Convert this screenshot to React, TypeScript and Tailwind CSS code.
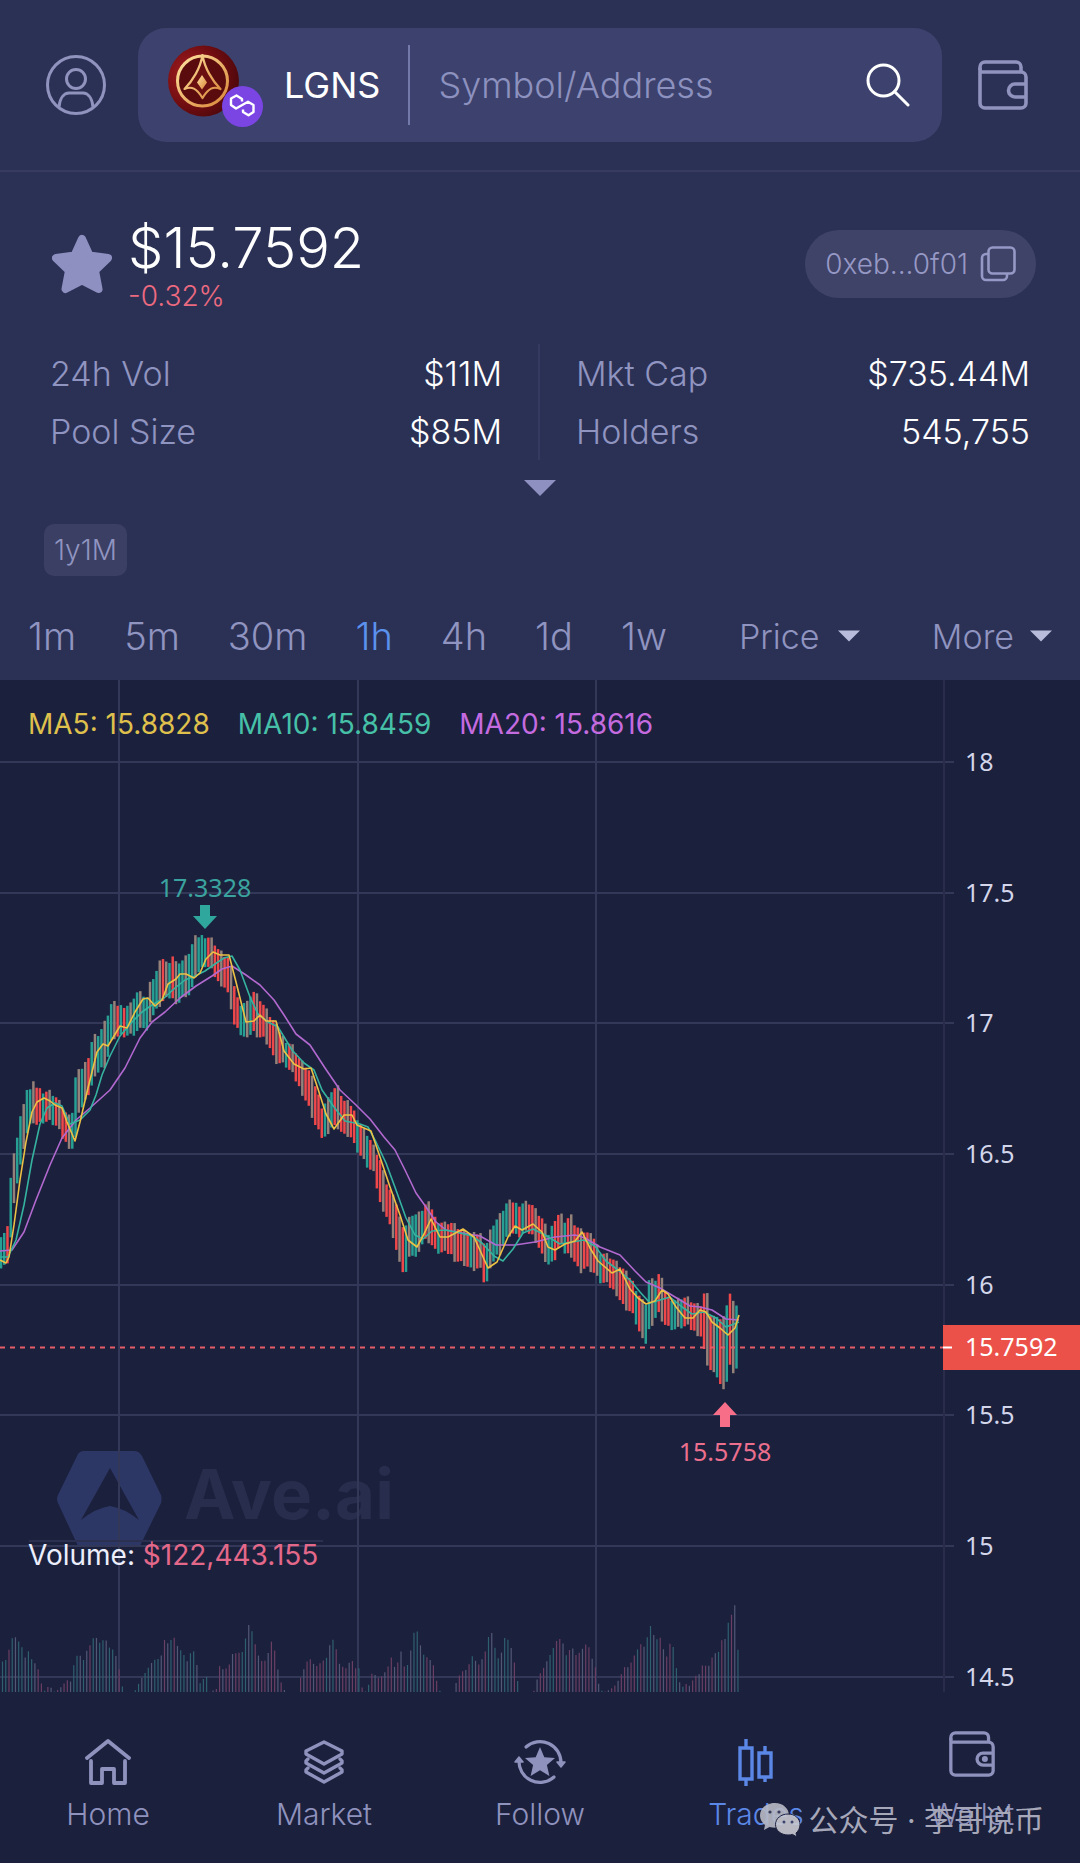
import type { ReactNode } from "react";

const INTERVALS = ["1m", "5m", "30m", "1h", "4h", "1d", "1w"];

const PRICE_TICKS = [
  { label: "18", y: 82 },
  { label: "17.5", y: 213 },
  { label: "17", y: 343 },
  { label: "16.5", y: 474 },
  { label: "16", y: 605 },
  { label: "15.5", y: 735 },
  { label: "15", y: 866 },
  { label: "14.5", y: 997 },
];

// [x, high, low] envelope of the hourly candles
const RANGE: number[][] = [
  [0, 557, 589], [4, 554, 587], [7, 552, 583], [9, 518, 579], [12, 482, 542], [16, 467, 508],
  [19, 439, 494], [23, 431, 470], [26, 408, 455], [30, 410, 445], [33, 403, 441], [37, 407, 445],
  [43, 411, 442], [50, 411, 442], [57, 418, 447], [63, 427, 459], [68, 437, 466], [72, 435, 469],
  [75, 399, 463], [79, 391, 429], [83, 387, 427], [88, 378, 415], [93, 356, 403], [99, 354, 390],
  [106, 340, 385], [112, 322, 358], [120, 326, 356], [130, 325, 356], [136, 312, 354], [141, 313, 344],
  [147, 318, 352], [150, 304, 340], [156, 293, 331], [162, 277, 322], [168, 285, 318], [172, 274, 316],
  [175, 283, 328], [182, 281, 318], [187, 276, 314], [191, 269, 316], [194, 258, 297], [200, 256, 291],
  [206, 256, 285], [212, 259, 291], [218, 269, 302], [224, 275, 306], [229, 279, 316], [234, 304, 344],
  [239, 324, 352], [245, 322, 358], [248, 322, 360], [252, 310, 350], [258, 316, 356], [264, 326, 358],
  [270, 336, 368], [275, 344, 382], [285, 360, 385], [293, 366, 395], [300, 380, 409], [308, 389, 425],
  [316, 407, 447], [322, 427, 457], [328, 419, 457], [332, 409, 445], [338, 407, 447], [344, 421, 455],
  [350, 423, 455], [356, 435, 469], [362, 447, 478], [368, 455, 488], [374, 467, 494], [380, 480, 523],
  [386, 502, 535], [392, 515, 552], [397, 525, 573], [401, 545, 590], [407, 545, 593], [411, 533, 568],
  [414, 535, 582], [420, 533, 567], [425, 525, 560], [430, 523, 562], [436, 540, 572], [444, 543, 573],
  [450, 542, 573], [455, 545, 580], [463, 552, 583], [472, 555, 590], [480, 553, 588], [484, 562, 602],
  [488, 563, 602], [491, 547, 587], [495, 542, 577], [500, 535, 573], [507, 523, 557], [512, 521, 553],
  [518, 525, 557], [525, 522, 553], [531, 523, 553], [537, 532, 563], [543, 540, 577], [549, 555, 585],
  [554, 540, 582], [560, 532, 563], [566, 543, 575], [570, 533, 573], [575, 545, 582], [580, 550, 592],
  [586, 552, 587], [594, 558, 593], [600, 572, 602], [608, 575, 605], [616, 582, 613], [624, 590, 627],
  [632, 600, 633], [638, 613, 648], [642, 620, 660], [646, 623, 663], [649, 600, 650], [655, 600, 638],
  [659, 594, 633], [663, 602, 642], [667, 617, 647], [676, 620, 650], [682, 617, 647], [688, 618, 647],
  [696, 625, 653], [702, 625, 657], [706, 604, 683], [709, 630, 685], [712, 640, 695], [716, 633, 693],
  [719, 638, 702], [722, 640, 708], [725, 635, 715], [729, 609, 683], [732, 623, 691], [736, 622, 691],
  [740, 640, 667],
];

// [x, height] envelope of the volume bars
const VOLUME: number[][] = [
  [0, 30], [6, 33], [9, 52], [13, 56], [16, 52], [20, 47], [23, 32], [26, 43], [30, 33], [34, 28],
  [37, 22], [40, 8], [43, 1], [48, 7], [52, 0], [58, 3], [62, 8], [66, 12], [70, 10], [73, 32],
  [76, 37], [80, 36], [83, 30], [86, 45], [90, 48], [93, 58], [97, 50], [100, 48], [103, 56], [107, 45],
  [112, 42], [116, 32], [119, 15], [122, 0], [133, 0], [139, 12], [143, 18], [149, 28], [154, 33], [159, 33],
  [163, 52], [167, 48], [172, 56], [176, 46], [182, 38], [186, 30], [191, 45], [195, 30], [198, 8], [201, 12],
  [205, 16], [208, 0], [215, 3], [218, 26], [222, 22], [227, 25], [231, 38], [241, 40], [245, 58], [248, 70],
  [252, 55], [256, 38], [262, 28], [268, 42], [271, 55], [275, 30], [278, 14], [282, 3], [285, 0], [297, 0],
  [299, 14], [305, 30], [309, 33], [314, 25], [320, 30], [326, 35], [330, 56], [334, 46], [338, 28], [344, 23],
  [350, 33], [355, 22], [359, 25], [361, 0], [366, 1], [368, 12], [371, 20], [376, 14], [381, 16], [386, 24],
  [390, 35], [394, 22], [400, 42], [404, 18], [410, 45], [414, 68], [417, 55], [421, 38], [428, 33], [433, 25],
  [436, 6], [439, 0], [452, 0], [456, 14], [462, 22], [466, 22], [470, 37], [477, 27], [483, 37], [487, 55],
  [490, 60], [494, 42], [498, 30], [503, 54], [507, 52], [511, 40], [515, 18], [518, 0], [532, 0], [536, 14],
  [542, 24], [549, 38], [555, 51], [560, 54], [565, 36], [570, 46], [575, 36], [580, 42], [586, 50], [591, 32],
  [595, 22], [598, 3], [602, 0], [608, 2], [615, 8], [620, 18], [624, 27], [627, 24], [633, 37], [639, 48],
  [643, 45], [649, 66], [654, 52], [660, 55], [664, 30], [668, 48], [671, 50], [674, 28], [678, 10], [683, 3],
  [686, 12], [689, 3], [692, 15], [698, 18], [702, 30], [706, 23], [712, 38], [717, 40], [720, 52], [723, 50],
  [726, 68], [729, 73], [733, 90], [737, 35], [740, 34],
];

const MA5 =
  "0,580 6,583 9,577 14,545 20,500 26,462 32,432 37,422 44,418 50,421 55,425 62,428 67,442 75,461 80,442 88,408 97,372 103,364 108,366 120,346 127,348 135,332 143,319 148,318 155,326 162,320 168,304 176,299 180,294 186,294 194,298 200,293 206,279 213,272 220,275 229,275 236,302 246,342 254,341 260,335 266,341 276,341 284,371 294,384 304,389 311,388 318,409 326,434 334,449 344,435 352,435 357,445 371,451 380,477 390,507 400,535 408,560 417,567 424,554 431,539 440,557 448,557 463,549 474,557 488,588 497,582 508,557 515,546 522,550 533,544 542,552 548,567 555,570 565,564 575,561 582,552 590,568 598,581 612,593 620,589 630,609 638,618 646,624 655,621 662,610 668,614 676,627 685,638 693,638 700,630 706,632 712,642 720,648 728,655 735,648 739,635";
const MA10 =
  "0,577 8,577 16,560 24,525 32,480 40,444 47,428 55,423 62,426 70,444 80,440 90,430 96,415 102,395 110,376 120,356 132,342 142,332 152,325 164,318 175,308 185,300 195,296 205,291 215,284 224,278 232,276 240,290 250,317 258,334 268,342 278,347 292,370 304,383 314,390 322,410 334,427 345,441 360,444 368,447 376,462 386,483 396,510 406,538 415,555 423,559 432,551 445,550 460,553 472,556 482,563 494,576 503,581 513,569 523,553 533,549 545,555 560,564 572,562 584,560 595,566 606,581 618,590 630,600 640,612 650,623 660,620 670,617 682,627 692,634 704,632 716,638 726,647 739,642";
const MA20 =
  "0,571 12,570 24,552 36,520 50,485 62,458 76,440 90,428 110,410 125,388 140,358 152,342 165,332 180,318 196,306 212,296 222,289 232,286 246,295 260,305 274,320 284,335 296,354 310,365 325,388 340,410 356,425 370,439 384,457 395,470 405,490 416,513 426,527 436,542 446,550 462,553 480,556 496,565 515,565 535,562 555,557 575,555 585,558 600,567 620,575 635,591 646,602 660,608 675,617 690,626 700,627 712,630 726,639 739,640";

function sample(points: number[][], x: number, col: number) {
  const i = points.findIndex((p) => p[0] >= x);
  if (i <= 0) return points[0][col];
  const a = points[i - 1];
  const b = points[i];
  return a[col] + ((b[col] - a[col]) * (x - a[0])) / (b[0] - a[0]);
}

const noise = (i: number) => ((i * 7919 + 104729) % 97) / 97;

const CANDLES = Array.from({ length: 228 }, (_, i) => {
  const x = 1 + i * 3.24;
  const high = sample(RANGE, x, 1);
  const low = sample(RANGE, x, 2);
  const rising = sample(RANGE, x + 5, 1) + sample(RANGE, x + 5, 2) < high + low;
  const n = noise(i);
  const color = n < 0.3 ? "#94827a" : (n < 0.9) === rising ? "#279f93" : "#ee484b";
  return { x, high: high + (n - 0.5) * 5, low: low + (noise(i + 31) - 0.5) * 5, color, volume: sample(VOLUME, x, 1) };
});

function WalletIcon({ className, dot }: { className?: string; dot?: boolean }) {
  return (
    <svg viewBox="0 0 50 50" className={className} fill="none" stroke="currentColor" strokeWidth="3.6" strokeLinejoin="round" aria-hidden="true">
      <path d="M43 13V7a5 5 0 0 0-5-5H7a5 5 0 0 0-5 5v3" />
      <path d="M2 8v35a5 5 0 0 0 5 5h36a5 5 0 0 0 5-5V17a5 5 0 0 0-5-5H2" />
      <path d="M48 24H37a6.5 6.5 0 0 0 0 13h11" />
      {dot && <circle cx="39" cy="30.5" r="1.5" fill="currentColor" />}
    </svg>
  );
}

function Caret({ className }: { className?: string }) {
  return (
    <svg viewBox="0 0 22 11" className={className} fill="currentColor" aria-hidden="true">
      <path d="M0 0h22L11 11z" />
    </svg>
  );
}

function TokenLogo() {
  return (
    <svg viewBox="0 0 96 84" className="h-[84px] w-24 shrink-0" aria-hidden="true">
      <defs>
        <radialGradient id="coin" cx="0.3" cy="0.4" r="0.75">
          <stop offset="0" stopColor="#a51d20" />
          <stop offset="0.6" stopColor="#6f0d11" />
          <stop offset="1" stopColor="#4a070b" />
        </radialGradient>
        <linearGradient id="gold" x1="0" y1="0" x2="1" y2="1">
          <stop offset="0" stopColor="#ffe3a0" />
          <stop offset="1" stopColor="#d98538" />
        </linearGradient>
      </defs>
      <circle cx="35.5" cy="38" r="35.5" fill="url(#coin)" />
      <circle cx="34.5" cy="38" r="25" fill="#5a0b0e" stroke="url(#gold)" strokeWidth="3" />
      <path d="M34.500 12c-2 13-10 26-18 34 7-3 12-1 18 9 6-10 11-12 18-9-8-8-16-21-18-34z" fill="#6b1011" stroke="url(#gold)" strokeWidth="2.200" strokeLinejoin="round" />
      <path d="M34 32l5 7.500-5 7-5-7z" fill="url(#gold)" />
      <circle cx="74.5" cy="63.5" r="20.500" fill="#7b45e4" />
      <path
        d="M74 58.500V56l-5.500-3.500L63 55.500V62l5 3.500 12-6.700 5.500 3.200v7l-5 3.300L75 69v-2.500"
        fill="none"
        stroke="#fff"
        strokeWidth="2.400"
        strokeLinejoin="round"
      />
    </svg>
  );
}

function Header() {
  return (
    <header className="flex items-center border-b-2 border-[#383b60] py-7 pr-13 pl-[46px] text-[#9093be]">
      <button type="button" aria-label="Profile" className="shrink-0">
        <svg viewBox="0 0 60 60" className="size-[60px]" fill="none" stroke="currentColor" strokeWidth="3">
          <circle cx="30" cy="30" r="28.5" />
          <circle cx="30" cy="24" r="9.5" />
          <path d="M13 52c1-9 5-14 10-14h14c5 0 9 5 10 14" />
        </svg>
      </button>
      <div className="ml-8 flex h-[114px] min-w-0 flex-1 items-center rounded-[28px] bg-[#3c426d] pr-8 pl-[30px]">
        <TokenLogo />
        <span className="ml-5 text-[36px] text-white">LGNS</span>
        <span className="ml-7 h-20 w-[2px] bg-[#7379a8]" />
        <input
          type="text"
          aria-label="Symbol or address"
          placeholder="Symbol/Address"
          className="ml-7 min-w-0 flex-1 bg-transparent text-[36px] font-light text-white outline-none placeholder:text-[#8d91bf]"
        />
        <button type="button" aria-label="Search" className="shrink-0 text-white">
          <svg viewBox="0 0 44 44" className="size-11" fill="none" stroke="currentColor" strokeWidth="3" strokeLinecap="round">
            <circle cx="17.5" cy="17.5" r="15.5" />
            <path d="M28.5 28.5L42 42" />
          </svg>
        </button>
      </div>
      <button type="button" aria-label="Wallet" className="ml-9 shrink-0">
        <WalletIcon className="size-[50px]" />
      </button>
    </header>
  );
}

function Stat({ label, value }: { label: string; value: string }) {
  return (
    <div className="flex h-[58px] items-center justify-between text-[34px]">
      <dt className="font-light text-[#9094c0]">{label}</dt>
      <dd className="font-[350] text-white">{value}</dd>
    </div>
  );
}

function Summary() {
  return (
    <section>
      <div className="flex items-center pt-11 pr-11 pl-13">
        <button type="button" aria-label="Favorite" className="text-[#8d90c0]">
          <svg viewBox="0 0 60 60" className="size-[60px]" fill="currentColor" stroke="currentColor" strokeWidth="8" strokeLinejoin="round">
            <path d="M30 5l7.5 16.5L56 24 43 36.5 46.500 55 30 46.500 13.500 55 17 36.500 4 24l18.500-2.500z" />
          </svg>
        </button>
        <div className="ml-4">
          <p className="text-[56px] leading-[64px] font-light text-white">$15.7592</p>
          <p className="text-[28px] leading-8 font-light text-[#ec6a80]">-0.32%</p>
        </div>
        <button type="button" className="ml-auto flex h-[68px] items-center gap-3 rounded-full bg-[#3f4368] px-5 text-[28px] font-light text-[#9698c5]">
          0xeb...0f01
          <svg viewBox="0 0 36 36" className="size-9" fill="none" stroke="currentColor" strokeWidth="2.6" aria-hidden="true">
            <rect x="8.5" y="1.5" width="26" height="26" rx="4" />
            <path d="M8 8H6a4 4 0 0 0-4 4v18a4 4 0 0 0 4 4h17a4 4 0 0 0 4-4v-2" />
          </svg>
        </button>
      </div>

      <div className="mt-8 grid grid-cols-2 px-[50px]">
        <dl className="border-r-2 border-[#353a60] pr-9">
          <Stat label="24h Vol" value="$11M" />
          <Stat label="Pool Size" value="$85M" />
        </dl>
        <dl className="pl-9">
          <Stat label="Mkt Cap" value="$735.44M" />
          <Stat label="Holders" value="545,755" />
        </dl>
      </div>
      <button type="button" aria-label="Show more stats" className="mx-auto mt-5 block text-[#8d90c0]">
        <Caret className="h-4 w-8" />
      </button>
      <span className="mt-7 ml-11 flex h-[52px] w-fit items-center rounded-[10px] bg-[#3b3f64] px-[10px] text-[28px] font-light text-[#9094c0]">
        1y1M
      </span>
    </section>
  );
}

function IntervalBar() {
  return (
    <div className="mt-4 flex h-[88px] items-center justify-between px-7 font-light text-[#9094c0]">
      <div className="flex gap-12 text-[38px]">
        {INTERVALS.map((x) => (
          <button key={x} type="button" className={x === "1h" ? "text-[#5b92ee]" : ""}>
            {x}
          </button>
        ))}
      </div>
      <div className="relative flex items-center text-[34px]">
        <select aria-label="Chart value" className="appearance-none bg-transparent pr-10 outline-none">
          <option>Price</option>
        </select>
        <Caret className="pointer-events-none absolute right-0 h-3 w-[22px] text-[#b9bcdb]" />
      </div>
      <button type="button" aria-haspopup="menu" className="flex items-center gap-4 text-[34px]">
        More
        <Caret className="h-3 w-[22px] text-[#b9bcdb]" />
      </button>
    </div>
  );
}

function Chart() {
  return (
    <section className="relative bg-[#1b203d]">
      <svg viewBox="0 0 1080 1012" className="block w-full" role="img" aria-label="LGNS hourly price chart">
        <g fill="#2d3765">
          <path d="M84 771h50q5 0 8 5l19 39q1 4 0 8l-21 43H78l-20-43q-2-4 0-8l19-39q2-5 7-5z" />
          <path d="M110 788l29 52q-15-12-29-14-14 2-29 14z" fill="#1b203d" />
        </g>
        <text x="184" y="839" fill="#292d4d" fontSize="69" fontWeight="700">
          Ave.ai
        </text>

        <g stroke="#343858" strokeWidth="2">
          {[119, 358, 596].map((x) => (
            <path key={x} d={`M${x} 0V1012`} />
          ))}
          {PRICE_TICKS.map((t) => (
            <path key={t.y} d={`M0 ${t.y}H954`} />
          ))}
          <path d="M944 0V1012" stroke="#2b2c4b" />
          <path d="M29 861H323" stroke="#2b2f50" />
        </g>

        {CANDLES.map((c, i) => (
          <path key={i} d={`M${c.x} ${c.high}V${c.low}`} stroke={c.color} strokeWidth="2.5" />
        ))}
        {CANDLES.map((c, i) => (
          <path
            key={i}
            d={`M${c.x + 1.5} 1012v${-c.volume}`}
            stroke={c.color === "#ee484b" ? "#6b3f63" : c.color === "#279f93" ? "#2f6070" : "#545877"}
            strokeWidth="1.2"
          />
        ))}

        <g fill="none" strokeWidth="1.6" strokeLinejoin="round">
          <polyline points={MA20} stroke="#b269cf" />
          <polyline points={MA10} stroke="#35b39f" />
          <polyline points={MA5} stroke="#ecc144" />
        </g>

        <path d="M0 667.5H943" stroke="#e55d68" strokeWidth="2" strokeDasharray="5 5" />
        <path d="M200 225h10v11h7l-12 13-12-13h7z" fill="#30a79c" />
        <path d="M725 722l12 13h-7v12h-10v-12h-7z" fill="#f76e88" />

        <g fontFamily="'Noto Sans', sans-serif" fontSize="25">
          <text x="205" y="217" textAnchor="middle" fill="#3ba39f">
            17.3328
          </text>
          <text x="725" y="781" textAnchor="middle" fill="#ec6f8e">
            15.5758
          </text>
          <g fill="#d3d6ea">
            {PRICE_TICKS.map((t) => (
              <text key={t.label} x="965" y={t.y + 9}>
                {t.label}
              </text>
            ))}
          </g>
          <path d="M943 645h137v45H943z" fill="#ec5149" />
          <path d="M943 667.5h9" stroke="#fff" strokeWidth="2" />
          <text x="965" y="676" fill="#fff">
            15.7592
          </text>
        </g>
      </svg>

      <div className="absolute top-6 left-7 flex gap-7 text-[28px] leading-10">
        <span className="text-[#dfc04c]">MA5: 15.8828</span>
        <span className="text-[#46c1a8]">MA10: 15.8459</span>
        <span className="text-[#c56be0]">MA20: 15.8616</span>
      </div>
      <p className="absolute bottom-[117px] left-7 text-[28px] leading-10 text-[#eceefb]">
        Volume: <span className="text-[#e3688a]">$122,443.155</span>
      </p>
    </section>
  );
}

function NavItem({ label, active, children }: { label: string; active?: boolean; children: ReactNode }) {
  return (
    <a href="#" className={`flex flex-1 flex-col items-center ${active ? "text-[#5b87e6]" : "text-[#8f92bd]"}`}>
      <span className="flex h-[68px] items-center">{children}</span>
      <span className="text-[30px] leading-9 font-light">{label}</span>
    </a>
  );
}

function BottomNav() {
  return (
    <nav className="relative flex pt-9 pb-8">
      <NavItem label="Home">
        <svg viewBox="0 0 46 46" className="size-[46px]" fill="none" stroke="currentColor" strokeWidth="3.8" strokeLinecap="round" strokeLinejoin="round" aria-hidden="true">
          <path d="M2 19L23 2l21 17" />
          <path d="M6 22v22h11V30h12v14h11V22" />
        </svg>
      </NavItem>
      <NavItem label="Market">
        <svg viewBox="0 0 42 46" className="h-[46px] w-[42px]" fill="none" stroke="currentColor" strokeWidth="3.4" strokeLinejoin="round" strokeLinecap="round" aria-hidden="true">
          <path d="M21 3l18 9v3L21 25 3 15v-3z" />
          <path d="M5 20l-2 2v2l18 10 18-10v-2l-2-2" />
          <path d="M5 29l-2 2v2l18 10 18-10v-2l-2-2" />
        </svg>
      </NavItem>
      <NavItem label="Follow">
        <svg viewBox="0 0 52 48" className="h-12 w-13" fill="none" stroke="currentColor" strokeWidth="3.2" strokeLinecap="round" aria-hidden="true">
          <path d="M12 9a21 21 0 0 1 35 16" />
          <path d="M40 39A21 21 0 0 1 5 22" />
          <path d="M43 24l4 5 4-5zM1 24l4-5 4 5z" fill="currentColor" strokeWidth="1.5" strokeLinejoin="round" />
          <path d="M26 9l4.300 10.200 10.700.9-8.100 7 2.500 10.900L26 32.200l-9.400 5.800 2.500-10.900-8.100-7 10.700-.9z" fill="currentColor" stroke="none" />
        </svg>
      </NavItem>
      <NavItem label="Trades" active>
        <svg viewBox="0 0 36 48" className="h-12 w-9" fill="none" stroke="currentColor" strokeWidth="3.4" aria-hidden="true">
          <path d="M2 10h12v31H2zM8 1v9M8 41v7" />
          <path d="M21 15h12v24H21zM27 8v7M27 39v5" />
        </svg>
      </NavItem>
      <NavItem label="Wallet">
        <WalletIcon dot className="mb-4 size-[46px]" />
      </NavItem>

      <div className="absolute right-9 bottom-6 flex items-center gap-2 text-[30px] leading-10 text-[#a6a8b9]">
        <svg viewBox="0 0 40 34" className="h-[34px] w-10 opacity-90" aria-hidden="true">
          <path d="M15 0C6 0 0 5.500 0 12.500c0 4 2 7 5 9.500l-1 5 5.500-3c2 .5 4 .8 6 .8C24 24 29 19 29 12.500 29 5.500 23 0 15 0z" fill="#b9bbc6" />
          <path d="M28 11c-7 0-12.500 4.500-12.500 10.500S21 32 28 32c1.500 0 3-.2 4.500-.6L37 34l-1-4c2.500-2 4-5 4-8.500C40 15.500 35 11 28 11z" fill="#c9cad2" stroke="#1b203d" strokeWidth="1" />
          <circle cx="10" cy="9" r="1.6" fill="#3a3f60" />
          <circle cx="19" cy="9" r="1.6" fill="#3a3f60" />
          <circle cx="24" cy="19" r="1.5" fill="#3a3f60" />
          <circle cx="32" cy="19" r="1.5" fill="#3a3f60" />
        </svg>
        <span>公众号 · 李哥说币</span>
      </div>
    </nav>
  );
}

export default function App() {
  return (
    <div className="min-h-screen bg-[#1b203d] font-[Inter,'Noto_Sans_CJK_SC',sans-serif]">
      <div className="bg-[#2b3155]">
        <Header />
        <Summary />
        <IntervalBar />
      </div>
      <Chart />
      <BottomNav />
    </div>
  );
}
